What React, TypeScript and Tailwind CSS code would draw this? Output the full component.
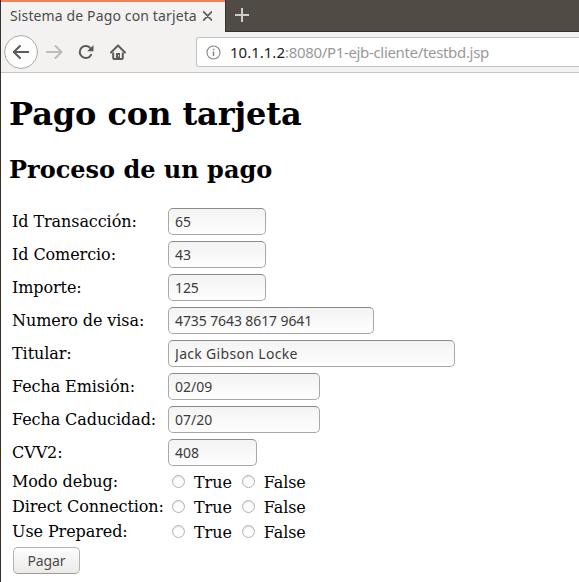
import React from "react";

type Field = { label: string; value: string; box: string; text: string };

const fields: Field[] = [
  { label: "Id Transacción:", value: "65", box: "w-[98px]", text: "tracking-[-0.1px]" },
  { label: "Id Comercio:", value: "43", box: "w-[98px]", text: "tracking-[-0.1px]" },
  { label: "Importe:", value: "125", box: "w-[98px]", text: "tracking-[-0.1px]" },
  { label: "Numero de visa:", value: "4735 7643 8617 9641", box: "w-[206px]", text: "tracking-[-0.1px]" },
  { label: "Titular:", value: "Jack Gibson Locke", box: "w-[287px]", text: "tracking-[0.32px]" },
  { label: "Fecha Emisión:", value: "02/09", box: "w-[152px]", text: "tracking-[0px]" },
  { label: "Fecha Caducidad:", value: "07/20", box: "w-[152px]", text: "tracking-[0px]" },
  { label: "CVV2:", value: "408", box: "w-[89px]", text: "tracking-[0px]" },
];

const options = ["Modo debug:", "Direct Connection:", "Use Prepared:"];

const serif = "font-['DejaVu_Serif',serif]";
const sans = "font-['Noto_Sans',sans-serif]";

function TabStrip() {
  return (
    <div className="flex h-8 bg-[#504c45]">
      <div className="flex w-56 border-t-2 border-[#f0825a] bg-[#f3f2f1] pl-[9px]">
        <span className="w-[190px] whitespace-nowrap text-[14px] leading-[27px] tracking-[0.13px] text-[#4c4c4c]">
          Sistema de Pago con tarjeta
        </span>
        <svg className="mt-[9px] h-[10px] w-[12px]" viewBox="0 0 12 10" fill="none" stroke="#5c5b5a" strokeWidth="1.7" strokeLinecap="round">
          <path d="M3.7 .9l8 8.2M11.7 .9L3.7 9.1" />
        </svg>
      </div>
      <div className="flex-1 border-b border-l border-[#35322e] pl-[9px] pt-2">
        <svg className="h-[14px] w-[14px]" viewBox="0 0 14 14" stroke="#cfcdca" strokeWidth="2">
          <path d="M7 0v14M0 7h14" />
        </svg>
      </div>
    </div>
  );
}

function Toolbar() {
  return (
    <div className="flex h-[41px] border-b border-[#c6c5c3] bg-[#f3f2f1] pl-[3px]">
      <svg className="mt-[3px] h-[34px] w-[34px]" viewBox="0 0 34 34" fill="none" strokeLinecap="round" strokeLinejoin="round">
        <circle cx="17" cy="17" r="16.4" fill="#fdfdfd" stroke="#aaa8a6" />
        <path d="M24.2 17H10M16 11l-6.2 6L16 23" stroke="#5b5a58" strokeWidth="2" />
      </svg>
      <svg className="ml-[7px] mt-3 h-4 w-[18px]" viewBox="0 0 18 16" fill="none" stroke="#bebcba" strokeWidth="2" strokeLinecap="round" strokeLinejoin="round">
        <path d="M2 8h14.5M10.5 2l6 6-6 6" />
      </svg>
      <svg className="ml-[15px] mt-3 h-4 w-4" viewBox="0 0 16 16">
        <path d="M13 10.9A6 6 0 1 1 12.6 4.5" fill="none" stroke="#5b5a58" strokeWidth="2" strokeLinecap="round" />
        <path d="M15.5 1v6.3H9.2z" fill="#5b5a58" />
      </svg>
      <svg className="ml-[16px] mt-3 h-4 w-4" viewBox="0 0 16 16" fill="none" stroke="#5b5a58">
        <path d="M1 8.5L8 1.5l7 7" strokeWidth="2" strokeLinecap="round" strokeLinejoin="round" />
        <path d="M3.2 8.5V14q0 1 1 1h7.6q1 0 1-1V8.5" strokeWidth="2" />
        <path d="M6 15V9h4v6z" fill="#5b5a58" stroke="none" />
        <path d="M8.5 11v1.5" stroke="#f3f2f1" />
      </svg>
      <div className="ml-[70px] mt-[5px] flex h-[30px] flex-1 rounded-l-[3px] border border-r-0 border-[#c2c1bf] bg-white">
        <svg className="ml-[9px] mt-[7px] h-[15px] w-[15px]" viewBox="0 0 15 15" fill="none" stroke="#858483">
          <circle cx="7.5" cy="7.5" r="6.5" strokeWidth="1.1" />
          <path d="M7.5 6.5V11M7.5 3.7v1.5" strokeWidth="1.5" />
        </svg>
        <span className="ml-[9px] whitespace-pre text-[15px] leading-[29px] tracking-[-0.33px] text-[#9a9998]">
          <span className="tracking-normal text-[#1c1c1c]">10.1.1.2</span>:8080/P1-ejb-cliente/testbd.jsp
        </span>
      </div>
    </div>
  );
}

function Radio({ label, name }: { label: string; name: string }) {
  return (
    <label className="flex">
      <input type="radio" name={name} className="mt-[5px] h-[13px] w-[13px] appearance-none rounded-full border border-[#b3b3b3] bg-[#fdfdfd] shadow-[inset_0_1px_1px_#dedede]" />
      <span className="ml-[9px]">{label}</span>
    </label>
  );
}

export default function App() {
  return (
    <div className={`h-[582px] w-[579px] overflow-hidden border-l border-[#35322e] bg-white ${sans}`}>
      <TabStrip />
      <Toolbar />
      <main className={`pl-2 text-black ${serif}`}>
        <h1 className="pt-[22px] text-[32px] font-bold leading-[38px] tracking-[-0.07px]">Pago con tarjeta</h1>
        <h2 className="mt-[23px] text-[24px] font-bold leading-[28px]">Proceso de un pago</h2>
        <form className="mt-[24px] pl-[3px] text-[16px] tracking-[-0.08px]">
          {fields.map((f) => (
            <div key={f.label} className="flex h-[33px]">
              <label className="w-[156px] whitespace-nowrap leading-[28px]">{f.label}</label>
              <input
                defaultValue={f.value}
                className={`h-[27px] rounded-[5px] border border-[#a9a8a7] border-t-[#8c8b8a] bg-linear-to-b from-[#f3f3f3] to-[#fefefe] px-[6px] text-[14px] text-[#3c3c3c] outline-none ${sans} ${f.box} ${f.text}`}
              />
            </div>
          ))}
          <div className="-mt-[2px] mb-[2px]">
            {options.map((o) => (
              <div key={o} className="flex h-[25px] leading-[25px]">
                <span className="w-[160px] whitespace-nowrap leading-[23px]">{o}</span>
                <div className="flex gap-[10px]">
                  <Radio name={o} label="True" />
                  <Radio name={o} label="False" />
                </div>
              </div>
            ))}
          </div>
          <button type="button" className={`ml-px block h-[27px] w-[67px] rounded-[5px] border border-[#b5b3b1] border-b-[#9d9b99] bg-linear-to-b from-[#fdfdfd] to-[#ebeae9] text-[14px] leading-[25px] text-[#4c4c4c] ${sans}`}>
            Pagar
          </button>
        </form>
      </main>
    </div>
  );
}
